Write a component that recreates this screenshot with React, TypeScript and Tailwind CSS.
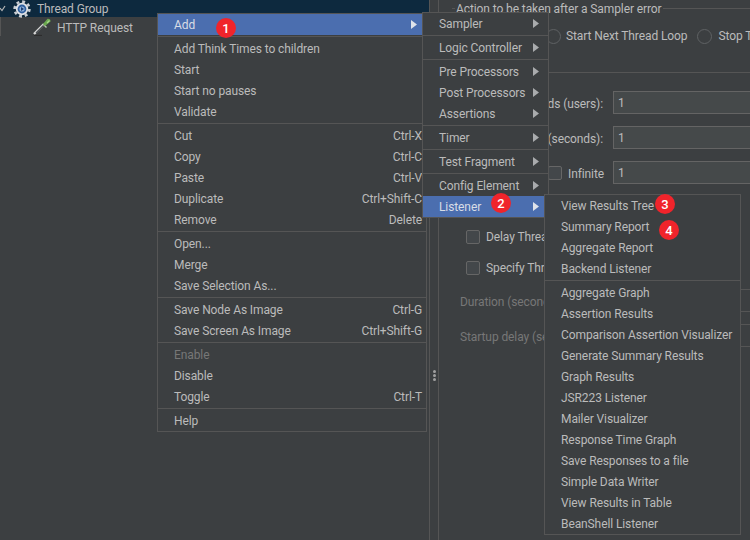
type Item = {
  label?: string
  shortcut?: string
  arrow?: boolean
  active?: boolean
  disabled?: boolean
}

const SEP: Item = {}

const mainMenu: Item[] = [
  { label: "Add", arrow: true, active: true },
  SEP,
  { label: "Add Think Times to children" },
  { label: "Start" },
  { label: "Start no pauses" },
  { label: "Validate" },
  SEP,
  { label: "Cut", shortcut: "Ctrl-X" },
  { label: "Copy", shortcut: "Ctrl-C" },
  { label: "Paste", shortcut: "Ctrl-V" },
  { label: "Duplicate", shortcut: "Ctrl+Shift-C" },
  { label: "Remove", shortcut: "Delete" },
  SEP,
  { label: "Open..." },
  { label: "Merge" },
  { label: "Save Selection As..." },
  SEP,
  { label: "Save Node As Image", shortcut: "Ctrl-G" },
  { label: "Save Screen As Image", shortcut: "Ctrl+Shift-G" },
  SEP,
  { label: "Enable", disabled: true },
  { label: "Disable" },
  { label: "Toggle", shortcut: "Ctrl-T" },
  SEP,
  { label: "Help" },
]

const addMenu: Item[] = [
  { label: "Sampler", arrow: true },
  SEP,
  { label: "Logic Controller", arrow: true },
  SEP,
  { label: "Pre Processors", arrow: true },
  { label: "Post Processors", arrow: true },
  { label: "Assertions", arrow: true },
  SEP,
  { label: "Timer", arrow: true },
  SEP,
  { label: "Test Fragment", arrow: true },
  SEP,
  { label: "Config Element", arrow: true },
  { label: "Listener", arrow: true, active: true },
]

const listenerMenu: Item[] = [
  { label: "View Results Tree" },
  { label: "Summary Report" },
  { label: "Aggregate Report" },
  { label: "Backend Listener" },
  SEP,
  { label: "Aggregate Graph" },
  { label: "Assertion Results" },
  { label: "Comparison Assertion Visualizer" },
  { label: "Generate Summary Results" },
  { label: "Graph Results" },
  { label: "JSR223 Listener" },
  { label: "Mailer Visualizer" },
  { label: "Response Time Graph" },
  { label: "Save Responses to a file" },
  { label: "Simple Data Writer" },
  { label: "View Results in Table" },
  { label: "BeanShell Listener" },
]

function Menu({ items, className }: { items: Item[]; className: string }) {
  return (
    <div className={`absolute border border-[#555555] bg-[#3c3f41] ${className}`}>
      {items.map((item, i) =>
        item.label ? (
          <div
            key={i}
            className={`flex h-[21px] items-center justify-between pl-4 ${
              item.active ? "bg-[#4b6eaf] text-[#d8dde6]" : ""
            } ${item.disabled ? "text-[#777777]" : ""}`}
          >
            <span className="whitespace-nowrap">{item.label}</span>
            {item.shortcut && <span className="whitespace-nowrap pr-1">{item.shortcut}</span>}
            {item.arrow && (
              <svg width="6" height="9" viewBox="0 0 6 9" className="mr-[9px]">
                <path d="M0 0 L6 4.5 L0 9 Z" fill={item.active ? "#dfe3ea" : "#a9abad"} />
              </svg>
            )}
          </div>
        ) : (
          <div key={i} className="flex h-[3px] items-center">
            <div className="h-px w-full bg-[#555555]" />
          </div>
        ),
      )}
    </div>
  )
}

function Badge({ n, className }: { n: number; className: string }) {
  return (
    <div
      className={`absolute flex h-5 w-5 items-center justify-center rounded-full bg-[#f0242b] text-[13px] font-medium text-white ${className}`}
    >
      {n}
    </div>
  )
}

function Field({ value, disabled }: { value?: string; disabled?: boolean }) {
  return (
    <div
      className={`flex h-[23px] w-[160px] shrink-0 items-center border pl-1 ${
        disabled ? "border-[#555555] bg-[#3c3f41]" : "border-[#646464] bg-[#45494a]"
      }`}
    >
      {value}
    </div>
  )
}

function Checkbox() {
  return <div className="h-[14px] w-[14px] shrink-0 rounded-[2px] border border-[#666666] bg-[#43474a]" />
}

function Radio() {
  return <div className="h-[15px] w-[15px] shrink-0 rounded-full border border-[#5f6264] bg-[#3c3f41]" />
}

function GearIcon() {
  return (
    <svg width="18" height="18" viewBox="0 0 18 18" className="shrink-0">
      <circle cx="9" cy="9" r="7.4" fill="none" stroke="#c9cdd2" strokeWidth="2.6" strokeDasharray="2.9 2.9" />
      <circle cx="9" cy="9" r="6.2" fill="#dfe2e6" />
      <circle cx="9" cy="9" r="4.4" fill="#2f5f9e" />
      <circle cx="9" cy="9" r="2.6" fill="#8fb2dc" />
      <path d="M8 7 L11 9 L8 11 Z" fill="#1d3f73" />
    </svg>
  )
}

function PipetteIcon() {
  return (
    <svg width="20" height="18" viewBox="0 0 20 18" className="shrink-0">
      <path d="M1 17.5 L9 17.5" stroke="#2c2c2c" strokeWidth="1.2" />
      <path d="M1 16 L11 6" stroke="#d8d8d8" strokeWidth="2.4" />
      <path d="M3 15 L11 7" stroke="#4a4f52" strokeWidth="1.2" />
      <path d="M10.5 6.5 L13.5 9.5" stroke="#b8c4b0" strokeWidth="1.4" />
      <path d="M12 8 L17.5 3.5 A2.4 2.4 0 0 0 14.5 0.8 L10 6 Z" fill="#6aa84f" />
      <path d="M14 5 L16.5 2.5" stroke="#a5d88a" strokeWidth="1.2" />
    </svg>
  )
}

export default function App() {
  return (
    <div className="relative flex h-[540px] w-[750px] overflow-hidden bg-[#3c3f41] font-['Roboto',sans-serif] text-[12px] leading-none tracking-[-0.1px] text-[#bbbbbb]">
      {/* tree */}
      <div className="w-[430px] shrink-0 border-r border-[#555555]">
        <div className="flex h-[17px] items-center bg-[#0d293e]">
          <svg width="6" height="7" viewBox="0 0 6 7" className="ml-0 mr-[7px] shrink-0">
            <path d="M0 3 L2 5.5 L5 1" fill="none" stroke="#b5b5b5" strokeWidth="1.2" />
          </svg>
          <GearIcon />
          <span className="ml-[6px]">Thread Group</span>
        </div>
        <div className="flex h-[19px] items-center border-l border-[#555555] pl-[32px]">
          <PipetteIcon />
          <span className="ml-[4px] mt-[3px]">HTTP Request</span>
        </div>
      </div>

      {/* split handle */}
      <div className="flex w-2 shrink-0 flex-col items-center gap-px pt-[370px]">
        <div className="h-[3px] w-[3px] rounded-full bg-[#a0a0a0]" />
        <div className="h-[3px] w-[3px] rounded-full bg-[#a0a0a0]" />
        <div className="h-[3px] w-[3px] rounded-full bg-[#a0a0a0]" />
      </div>

      {/* thread group panel */}
      <div className="min-w-0 flex-1 overflow-hidden border-l border-[#555555]">
        <div className="flex h-[17px] items-center pl-[13px]">
          <div className="h-px w-[3px] bg-[#555555]" />
          <span className="ml-[1px] mr-[1px] whitespace-nowrap">Action to be taken after a Sampler error</span>
          <div className="h-px flex-1 bg-[#555555]" />
        </div>
        <div className="mt-[11px] flex h-4 items-center pl-[107px] whitespace-nowrap">
          <Radio />
          <span className="ml-[5px]">Start Next Thread Loop</span>
          <div className="ml-[10px]">
            <Radio />
          </div>
          <span className="ml-[6px]">Stop Test</span>
        </div>
        <div className="ml-[13px] mt-7 h-px bg-[#555555]" />

        <div className="mt-[18px] flex items-center">
          <span className="w-[164px] shrink-0 whitespace-nowrap pt-[2px] text-right">Number of Threads (users):</span>
          <div className="ml-[10px]">
            <Field value="1" />
          </div>
        </div>
        <div className="mt-3 flex items-center">
          <span className="w-[164px] shrink-0 whitespace-nowrap pt-[2px] text-right">Ramp-up period (seconds):</span>
          <div className="ml-[10px]">
            <Field value="1" />
          </div>
        </div>
        <div className="mt-3 flex items-center">
          <div className="flex w-[165px] shrink-0 items-center justify-end gap-[6px] whitespace-nowrap">
            <Checkbox />
            <span className="pt-[2px]">Infinite</span>
          </div>
          <div className="ml-[9px]">
            <Field value="1" />
          </div>
        </div>

        <div className="mt-[45px] flex h-4 items-center gap-[6px] whitespace-nowrap pl-[27px]">
          <Checkbox />
          <span>Delay Thread creation until needed</span>
        </div>
        <div className="mt-[15px] flex h-4 items-center gap-[6px] whitespace-nowrap pl-[27px]">
          <Checkbox />
          <span>Specify Thread lifetime</span>
        </div>

        <div className="mt-[13px] flex items-center text-[#777777]">
          <span className="w-[174px] shrink-0 whitespace-nowrap pl-[21px] pt-[3px]">Duration (seconds):</span>
          <Field disabled />
        </div>
        <div className="mt-3 flex items-center text-[#777777]">
          <span className="w-[174px] shrink-0 whitespace-nowrap pl-[21px] pt-[3px]">Startup delay (seconds):</span>
          <Field disabled />
        </div>
      </div>

      {/* context menus */}
      <Menu items={mainMenu} className="left-[157px] top-[13px] w-[270px]" />
      <Menu items={addMenu} className="left-[422px] top-[12px] w-[127px]" />
      <Menu items={listenerMenu} className="left-[544px] top-[194px] w-[197px]" />

      <Badge n={1} className="left-[216px] top-[18px]" />
      <Badge n={2} className="left-[491px] top-[193px]" />
      <Badge n={3} className="left-[655px] top-[194px]" />
      <Badge n={4} className="left-[659px] top-[220px]" />
    </div>
  )
}
